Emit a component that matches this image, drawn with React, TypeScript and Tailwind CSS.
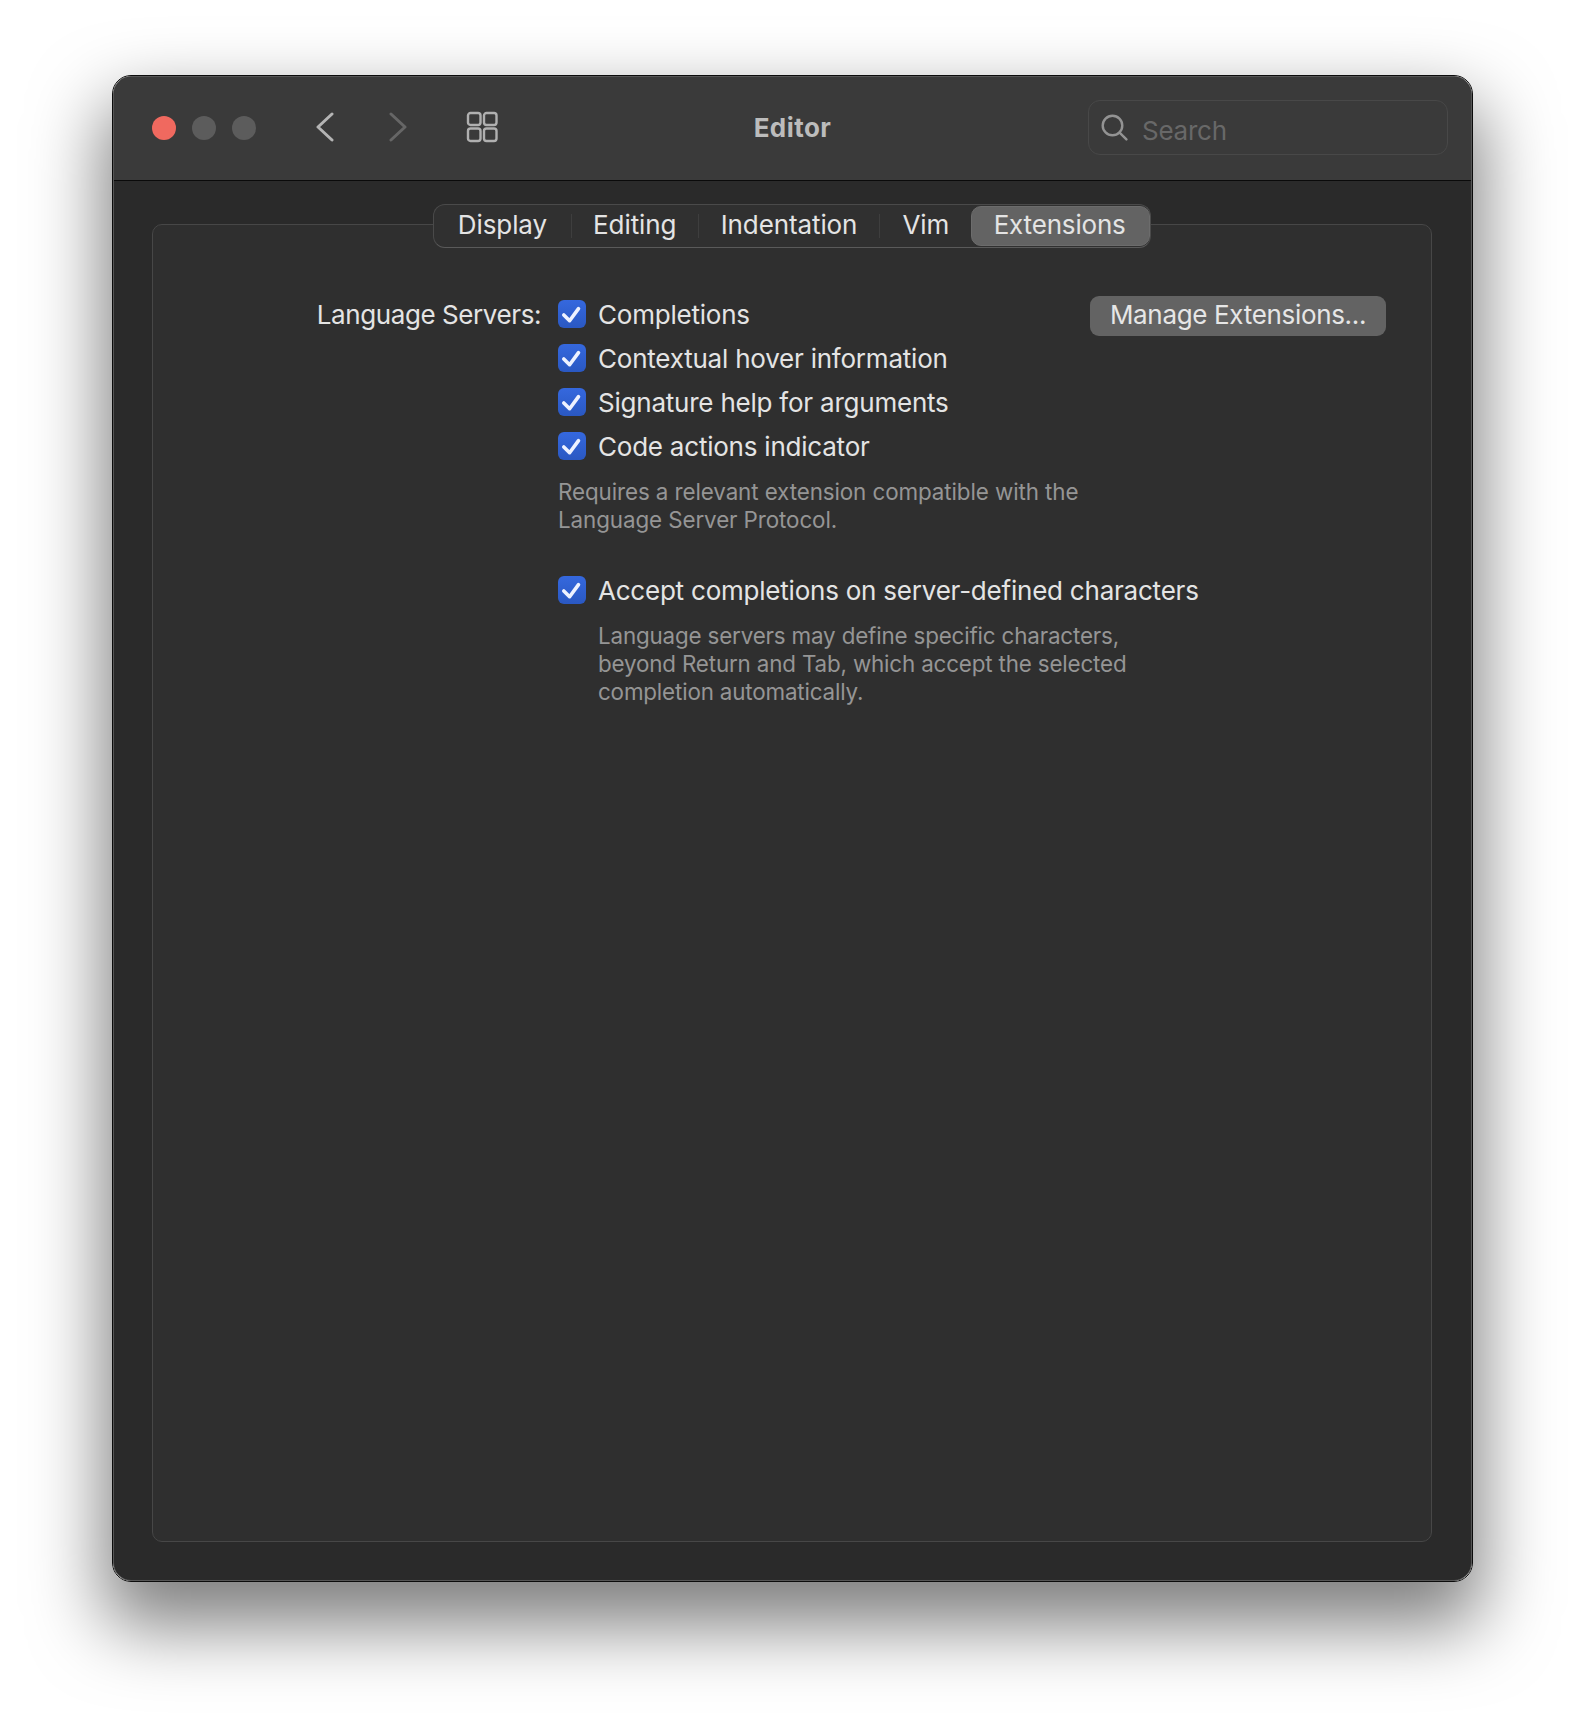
const font = { fontFamily: '"Inter", "Liberation Sans", sans-serif' };

function Check({ children }: { children: string }) {
  return (
    <div className="flex h-[44px] items-center">
      <span className="flex h-[28px] w-[28px] items-center justify-center rounded-[6px] bg-linear-to-b from-[#3568de] to-[#2a58c2]">
        <svg width="28" height="28" viewBox="0 0 28 28" fill="none">
          <path d="M5.8 15 L11.6 20.7 L20.5 8.6" stroke="#eef2ff" strokeWidth="3.6" strokeLinecap="round" strokeLinejoin="round" />
        </svg>
      </span>
      <span className="mt-[2px] ml-[12px] text-[26px] leading-[32px] tracking-[-0.22px] whitespace-nowrap text-[#e4e4e4]">{children}</span>
    </div>
  );
}

function Divider() {
  return <span className="h-[24px] w-px bg-[#3e3e3e]" />;
}

export default function App() {
  return (
    <div className="min-h-[1730px] w-[1584px] bg-white pt-[75px] pl-[112px]" style={font}>
      <div className="h-[1507px] w-[1361px] rounded-[19px] border border-[#0c0c0c] shadow-[0_36px_72px_8px_rgba(0,0,0,0.5)]">
        <div className="flex h-full flex-col overflow-hidden rounded-[18px] border border-[#565656] bg-[#2a2a2a]">
          {/* Title bar */}
          <div className="grid h-[104px] shrink-0 grid-cols-[1fr_auto_1fr] items-center border-b border-[#0a0a0a] bg-[#3a3a3a] pb-[2px]">
            <div className="flex items-center pl-[38px]">
              <span className="h-[24px] w-[24px] rounded-full bg-[#f0695f]" />
              <span className="ml-[16px] h-[24px] w-[24px] rounded-full bg-[#5c5c5c]" />
              <span className="ml-[16px] h-[24px] w-[24px] rounded-full bg-[#5c5c5c]" />
              <svg className="ml-[60px] -mt-[2px]" width="18" height="30" viewBox="0 0 18 30" fill="none">
                <path d="M16 2 L2 15 L16 28" stroke="#b4b4b4" strokeWidth="3" strokeLinecap="round" strokeLinejoin="round" />
              </svg>
              <svg className="ml-[55px] -mt-[2px]" width="18" height="30" viewBox="0 0 18 30" fill="none">
                <path d="M2 2 L16 15 L2 28" stroke="#666666" strokeWidth="3" strokeLinecap="round" strokeLinejoin="round" />
              </svg>
              <svg className="ml-[59px] -mt-[2px]" width="32" height="32" viewBox="0 0 32 32" fill="none" stroke="#b0b0b0" strokeWidth="2.4">
                <rect x="2" y="2" width="12.5" height="12" rx="2.5" />
                <rect x="18" y="2" width="12.5" height="12" rx="2.5" />
                <rect x="2" y="17.5" width="12.5" height="12.5" rx="2.5" />
                <rect x="18" y="17.5" width="12.5" height="12.5" rx="2.5" />
              </svg>
            </div>
            <div className="text-[26px] leading-[32px] font-bold tracking-[0.45px] text-[#bcbcbc]">Editor</div>
            <div className="flex justify-end pr-[23px]">
              <div className="flex h-[55px] w-[360px] items-center rounded-[12px] border border-[#484848] pl-[12px]">
                <svg width="27" height="27" viewBox="0 0 27 27" fill="none" stroke="#939393" strokeWidth="2.4" strokeLinecap="round">
                  <circle cx="11.5" cy="11.5" r="9.8" />
                  <path d="M18.6 18.6 L25.4 25.4" />
                </svg>
                <span className="mt-[6px] ml-[14px] text-[26px] leading-[32px] tracking-[-0.25px] text-[#686868]">Search</span>
              </div>
            </div>
          </div>

          {/* Body */}
          <div className="flex-1 pt-[43px] pr-[39px] pl-[38px]">
            <div className="flex h-[1318px] flex-col rounded-[10px] border border-[#474747] bg-[#2f2f2f]">
              <div className="-mt-[21px] flex h-[44px] w-[718px] items-center self-center rounded-[12px] border border-[#4a4a4a] border-b-[#5a5a5a] bg-[#303030] text-[26px] leading-[32px] tracking-[-0.1px] text-[#e4e4e4]">
                <span className="-mt-[2px] w-[137px] text-center">Display</span>
                <Divider />
                <span className="-mt-[2px] w-[126px] text-center">Editing</span>
                <Divider />
                <span className="-mt-[2px] w-[181px] text-center">Indentation</span>
                <Divider />
                <span className="-mt-[2px] w-[91px] text-center">Vim</span>
                <span className="flex h-[40px] w-[179px] items-center justify-center rounded-[10px] border border-[#6c6c6c] bg-[#636363] pr-[2px] pb-[2px] tracking-[-0.18px]">Extensions</span>
              </div>

              <div className="mt-[44px] grid grid-cols-[388px_minmax(0,1fr)_auto] gap-x-[17px] pr-[45px]">
                <div className="flex h-[44px] items-center justify-end pt-[2px] text-[26px] leading-[32px] tracking-[-0.42px] whitespace-nowrap text-[#e4e4e4]">
                  Language Servers:
                </div>
                <div>
                  <Check>Completions</Check>
                  <Check>Contextual hover information</Check>
                  <Check>Signature help for arguments</Check>
                  <Check>Code actions indicator</Check>
                  <p className="mt-[10px] text-[22.4px] leading-[28px] tracking-[-0.1px] whitespace-nowrap text-[#959595]">
                    Requires a relevant extension compatible with the
                    <br />
                    Language Server Protocol.
                  </p>
                  <div className="mt-[34px]">
                    <Check>Accept completions on server-defined characters</Check>
                  </div>
                  <p className="mt-[10px] ml-[40px] text-[22.4px] leading-[28px] tracking-[-0.17px] whitespace-nowrap text-[#959595]">
                    Language servers may define specific characters,
                    <br />
                    beyond Return and Tab, which accept the selected
                    <br />
                    completion automatically.
                  </p>
                </div>
                <button className="mt-[4px] flex h-[40px] w-[296px] items-center justify-center rounded-[9px] bg-[#636363] pb-[2px] text-[26px] leading-[32px] tracking-[-0.33px] whitespace-nowrap text-[#e6e6e6]">
                  Manage Extensions...
                </button>
              </div>
            </div>
          </div>
        </div>
      </div>
    </div>
  );
}
